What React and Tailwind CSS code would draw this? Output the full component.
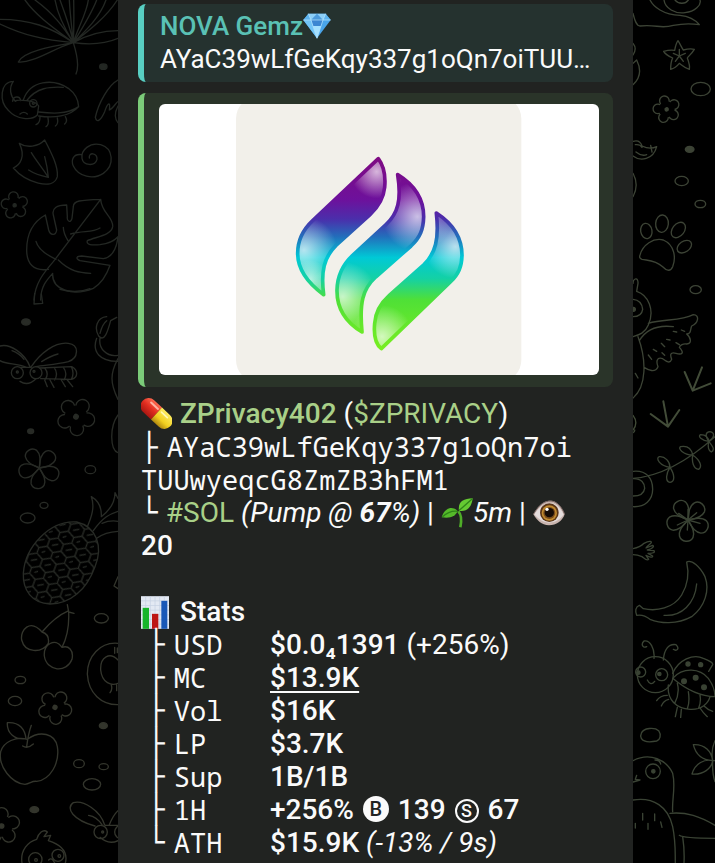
import React from 'react';

const stats = [
  { label: 'USD', value: <>$0.0₄1391 <span className="font-normal">(+256%)</span></> },
  { label: 'MC', value: <a href="#mc" className="underline decoration-2 underline-offset-4">$13.9K</a> },
  { label: 'Vol', value: '$16K' },
  { label: 'LP', value: '$3.7K' },
  { label: 'Sup', value: '1B/1B' },
  {
    label: '1H',
    value: (
      <>
        +256%{' '}
        <span className="mx-0.5 inline-flex size-[26px] items-center justify-center rounded-full bg-[#fafafa] align-[3px] text-xl leading-none font-medium text-[#212321]">B</span>
        {' '}139{' '}
        <span className="mx-0.5 inline-flex size-6 items-center justify-center rounded-full border-2 border-[#fafafa] align-[2px] text-lg leading-none font-medium">S</span>
        {' '}67
      </>
    ),
  },
  { label: 'ATH', value: <>$15.9K <i className="font-normal">(-13% / 9s)</i></> },
];

const angles = [0, 72, 144, 216, 288];

// Five round petals with a merged outline
const Blossom = ({ x, y, r, turn = 0 }) => (
  <g transform={`translate(${x} ${y}) rotate(${turn})`}>
    {angles.map((a) => (
      <circle key={a} cx="0" cy={-r * 0.66} r={r * 0.36} transform={`rotate(${a})`} />
    ))}
    <circle r={r * 0.6} fill="#000" stroke="none" />
    <circle r={r * 0.12} fill="currentColor" />
  </g>
);

// Five separate petals that meet in the middle
const Petals = ({ x, y, r, turn = 0 }) => (
  <g transform={`translate(${x} ${y}) rotate(${turn}) scale(${r / 60})`}>
    {angles.map((a) => (
      <path key={a} d="M0 0C-12-14-24-32-19-48C-12-64 12-64 19-48C24-32 12-14 0 0Z" transform={`rotate(${a})`} />
    ))}
  </g>
);

const Pebble = ({ x, y, rx, ry, solid }) => (
  <ellipse cx={x} cy={y} rx={rx} ry={ry} fill={solid ? 'currentColor' : 'none'} />
);

const LeftDoodles = () => (
  <svg viewBox="0 0 354 2589" preserveAspectRatio="xMinYMin slice" className="block h-full w-full" fill="none" stroke="currentColor" strokeWidth="4" strokeLinecap="round" strokeLinejoin="round" aria-hidden="true">
    <g className="text-[#232723]">
      <path d="M220 128C150 80 90 58 0 58M220 128C130 120 70 105 0 72M220 128C160 145 100 190 55 186C70 155 150 140 220 128M220 128C170 90 110 50 75 0M220 128C190 80 160 40 105 0M220 128C190 80 172 40 165 0M220 128C210 80 195 40 180 0M220 128C215 80 210 40 208 0M220 128C222 80 222 40 221 0M220 128C235 80 260 40 265 0M220 128C250 80 275 40 290 0M220 128C260 90 300 50 318 0M220 128C270 90 320 50 352 0M220 128C270 100 310 92 354 92M220 128C270 135 320 130 354 115M220 128C230 160 238 200 228 222" />
      <Pebble x="310" y="200" rx="11" ry="8" solid />
      <path d="M40 244C0 245-4 305 26 332C50 360 95 362 112 345L116 318C108 300 50 298 46 304C32 290 25 265 40 244M38 304C38 288 60 286 62 302M70 300C90 240 160 235 205 265C225 280 235 300 236 320C200 345 150 340 116 336M80 302C110 262 150 260 190 262M116 348C160 355 210 350 236 320M120 352Q120 370 108 374M144 354Q148 374 138 380M172 354Q176 372 166 378M196 350Q204 364 194 372M60 342Q72 332 82 342" />
      <circle cx="100" cy="310" r="11" /><circle cx="100" cy="310" r="3" />
      <path d="M354 240C325 255 295 310 286 352C290 370 302 362 314 335C322 310 332 300 328 330C340 325 350 305 354 305M354 318C342 340 345 360 354 368" />
      <path d="M58 430C80 445 115 440 134 420C155 460 175 500 172 530C160 575 75 545 40 504C60 495 78 470 58 430M145 532C110 525 98 518 86 510M145 532C125 500 110 485 94 458M145 532C142 500 138 485 134 470" />
      <path d="M245 464C220 460 212 480 220 498C235 530 280 540 310 520C345 495 340 445 302 434C270 426 242 450 246 475C250 498 285 500 291 478C292 458 265 455 268 474" />
      <Blossom x="44" y="616" r="40" turn="-8" />
      <path d="M102 900C105 850 130 820 160 785L302 598C240 600 220 602 220 620L216 655C212 670 200 665 202 650L200 615C170 615 155 625 160 645L170 690C168 710 150 705 146 690L136 645C100 665 80 700 80 750C80 790 100 815 145 808M122 900C122 860 140 840 158 820C155 870 220 890 280 865C305 850 320 825 330 796L240 782C225 775 230 768 245 768L310 776C340 772 350 740 354 712M302 598C305 640 340 650 338 680C335 705 290 710 262 722C258 735 275 736 300 734C330 730 345 720 354 710M204 722C190 700 190 690 190 682M212 702C250 690 275 700 300 684M168 778C130 760 112 740 108 724M175 780C210 815 240 818 272 820" />
      <path d="M104 880L102 912L128 910L124 882M180 868Q230 882 270 866" />
    </g>
    <g transform="translate(0 870)" className="text-[#282b26]">
      <Pebble x="78" y="96" rx="13" ry="9" solid />
      <path d="M90 230C75 190 30 160 0 168M80 232C50 218 20 225 0 212M94 230C120 190 165 155 205 160C240 165 235 205 205 215C165 225 130 225 108 230M125 215Q150 198 174 192M36 182Q58 190 72 208M120 234L215 230C235 240 235 262 215 268L122 266M134 234Q148 250 136 268M162 232Q176 250 164 270M190 232Q204 250 192 270M214 230Q224 250 214 268M60 274Q84 290 108 266M134 270L142 290M150 270L162 292M184 270L196 290M202 270L218 290M62 232H94" />
      <circle cx="52" cy="248" r="18" /><circle cx="108" cy="248" r="18" /><circle cx="52" cy="246" r="3" /><circle cx="102" cy="244" r="3" />
      <Blossom x="228" y="380" r="56" turn="32" />
      <Pebble x="92" y="424" rx="9" ry="7" solid />
      <Petals x="118" y="534" r="62" turn="-30" />
      <Pebble x="271" y="539" rx="16" ry="12" />
      <Pebble x="132" y="646" rx="12" ry="9" />
      <Pebble x="83" y="684" rx="22" ry="15" />
      <path d="M320 80C290 82 282 115 296 138C315 160 325 115 332 92L350 82M300 130C305 110 312 98 320 92M290 145C275 185 300 215 354 214M300 145C295 175 320 202 354 196M354 206C330 250 330 280 354 328M354 375C328 410 330 480 354 488" />
      <path d="M262 710C275 680 285 650 274 620C300 635 305 660 304 680C330 660 345 635 345 608L354 625M280 722C310 680 330 672 354 664M290 745C310 730 330 725 354 724M306 700Q330 690 354 694" />
      <defs>
        <pattern id="scales" width="44" height="64" patternUnits="userSpaceOnUse" patternTransform="rotate(20)">
          <path d="M0 12L22 0L44 12V34L22 46L0 34ZM22 46V64M14 26L28 18M36 56L44 50" fill="none" stroke="#282b26" strokeWidth="4" />
        </pattern>
      </defs>
      <path d="M70 850C75 770 150 690 230 696C290 710 310 770 285 830C260 900 210 942 150 942C95 940 68 900 70 850Z" fill="url(#scales)" />
    </g>
    <g transform="translate(0 1710)" className="text-[#33352c]">
      <path d="M126 186C90 145 60 180 65 210C75 250 125 250 145 220C148 200 140 190 126 186ZM126 186Q165 140 206 122M202 104L206 126L222 130M206 126C208 170 200 205 186 232M186 232C165 200 130 225 133 258C140 305 200 310 216 268C222 240 205 225 186 232M354 20L342 48L354 56" />
      <Pebble x="304" y="145" rx="21" ry="14" />
      <Pebble x="61" y="330" rx="16" ry="11" />
      <Pebble x="45" y="393" rx="20" ry="14" />
      <Blossom x="165" y="412" r="50" turn="32" />
      <path d="M354 220C300 215 262 260 262 312C265 370 305 405 354 404M354 270C330 245 300 260 302 300C306 340 335 348 354 340M334 345Q338 360 330 368M350 345V362M344 232V250M352 234V248" />
      <Pebble x="310" y="467" rx="12" ry="9" solid />
      <Pebble x="237" y="581" rx="16" ry="12" />
      <Pebble x="311" y="590" rx="14" ry="9" />
      <Pebble x="276" y="643" rx="26" ry="17" />
      <path d="M82 508C50 498 10 515 2 545C-6 590 35 640 75 643C90 642 95 632 110 634C150 630 180 580 172 530C165 490 120 480 82 508ZM80 530Q85 490 94 466M78 506C45 510 20 490 22 458C60 455 75 480 78 506M68 528Q82 538 100 522" />
      <Pebble x="103" y="719" rx="13" ry="9" solid />
      <Blossom x="5" y="768" r="54" />
      <path d="M314 765C300 720 250 690 220 698C195 715 220 750 285 768M306 764Q290 740 266 736M328 764Q340 735 354 722M316 766H354M300 802Q325 825 354 812" />
      <circle cx="302" cy="786" r="20" /><circle cx="308" cy="786" r="3" /><circle cx="364" cy="786" r="20" />
      <path d="M66 879C60 840 85 815 110 808C115 790 130 775 142 786L132 800L152 796L145 812C185 825 205 845 196 879M146 870Q156 860 164 879" />
      <circle cx="106" cy="868" r="20" /><circle cx="174" cy="856" r="18" /><circle cx="108" cy="870" r="4" /><circle cx="178" cy="858" r="4" />
    </g>
  </svg>
);

const RightDoodles = () => (
  <svg viewBox="39 0 246 2589" preserveAspectRatio="xMinYMin slice" className="block h-full w-full" fill="none" stroke="currentColor" strokeWidth="4" strokeLinecap="round" strokeLinejoin="round" aria-hidden="true">
    <g className="text-[#3c4335]">
      <path d="M39 40C45 65 50 78 60 78C110 72 120 88 160 76Q200 68 238 74C220 52 200 48 180 46C130 45 100 20 90 0M132 0C135 25 165 42 195 38C225 35 245 15 240 0M165 0C175 12 195 14 205 0M39 130Q52 145 39 165M39 190L50 180C65 210 60 235 39 254" />
      <path d="M174 122C182 135 186 145 190 150C205 146 215 146 223 148C216 160 206 168 202 174C208 190 210 200 208 208C194 204 186 196 178 190C170 200 160 206 152 208C152 195 154 182 158 174C145 168 135 162 131 154C145 150 158 150 164 151C166 140 168 130 174 122ZM178 168V148M178 168L196 160M178 168L190 184M178 168L166 184M178 168L160 160" />
      <Pebble x="242" y="267" rx="29" ry="20" />
      <Blossom x="140" y="328" r="40" turn="-15" />
      <path d="M39 424Q60 418 66 438Q90 450 110 440C100 480 60 485 39 468M46 434Q60 432 66 442M48 456Q65 470 80 464M92 436L96 456M39 520Q58 555 39 590" />
      <Pebble x="209" y="448" rx="13" ry="9" solid />
      <Pebble x="185" y="543" rx="20" ry="14" />
      <Pebble x="241" y="612" rx="16" ry="11" />
      <path d="M60 765C68 735 100 712 130 720C165 735 168 775 158 800C150 818 138 810 128 800C105 780 85 782 66 778C58 775 58 770 60 765Z" />
      <ellipse cx="79" cy="693" rx="17" ry="23" transform="rotate(-10 79 693)" />
      <ellipse cx="126" cy="671" rx="19" ry="26" transform="rotate(5 126 671)" />
      <ellipse cx="175" cy="690" rx="18" ry="26" transform="rotate(38 175 690)" />
      <ellipse cx="193" cy="740" rx="16" ry="24" transform="rotate(55 193 740)" />
      <Pebble x="227" y="869" rx="17" ry="12" />
      <path d="M39 850C40 835 55 830 54 850L50 874C85 885 105 930 85 975C75 1000 55 1005 39 1010M39 898Q65 900 68 928Q65 950 39 950M85 970C130 955 180 965 220 944C240 945 235 970 215 978C210 990 214 1002 200 1002C215 1015 215 1030 200 1032C190 1030 180 1035 178 1042C195 1060 185 1065 168 1060C150 1055 150 1065 155 1078C150 1092 140 1085 128 1076C110 1070 108 1085 114 1100C105 1120 85 1110 72 1102M58 1022C80 985 120 975 160 980M54 1010C80 1080 80 1160 39 1194M85 1065L95 1078M100 1048L110 1054M124 1030L134 1040M140 1018L150 1020M126 1058L134 1066M168 1028L178 1034M160 994L170 996M184 990L194 994M46 1120L54 1134" />
      <circle cx="40" cy="928" r="6" fill="currentColor" />
    </g>
    <g className="text-[#424c38]" strokeWidth="6">
      <path d="M218 1172L194 1116M218 1172L246 1102M218 1172L272 1150M144 1280L92 1242M144 1280L130 1204M144 1280L178 1230" />
      <path d="M39 1246Q56 1268 39 1290" strokeWidth="4" />
    </g>
    <g transform="translate(0 1290)" className="text-[#3a4334]">
      <path d="M39 145C110 140 190 105 285 20M150 112C120 108 105 85 118 80C135 78 150 95 150 112C165 135 165 155 150 157C135 155 138 130 150 112M218 75C190 75 172 55 182 50C205 46 215 60 218 75C240 90 248 110 236 118C220 116 215 95 218 75M266 34C245 32 232 18 242 14C258 14 266 24 266 34C280 50 285 60 274 66C262 60 264 45 266 34M266 34C255 18 256 6 270 5C285 8 285 22 266 34M39 124C80 120 98 145 98 178C98 210 75 232 39 230M39 146C65 145 74 160 74 175C72 190 60 198 39 198M39 8Q45 4 44 0" />
      <Petals x="204" y="270" r="64" turn="-30" />
      <path d="M204 270L176 250M204 270L204 238M204 270L230 248M204 270L240 280M204 270L202 300M204 270L172 285" />
      <path d="M39 356Q60 352 72 340C90 330 100 334 90 342Q80 350 78 354L98 346C105 350 95 356 82 360L102 362C106 368 98 370 84 370L98 378C98 384 90 382 78 376L86 388C80 394 72 384 66 380Q52 374 39 374" />
      <path d="M200 396C215 388 240 410 255 440C270 480 255 530 215 560C170 585 120 580 90 568Q70 552 50 556C45 545 46 530 58 526L70 536C110 545 160 535 185 495C200 470 210 440 200 396ZM230 462C225 520 185 560 132 556" />
      <circle cx="106" cy="734" r="54" /><circle cx="125" cy="734" r="18" /><circle cx="62" cy="726" r="15" /><circle cx="118" cy="732" r="5" fill="currentColor" /><circle cx="55" cy="728" r="5" fill="currentColor" />
      <path d="M82 750Q92 770 104 754M102 685C105 655 90 630 72 633C62 642 68 656 80 650M130 690C132 660 145 640 168 644C180 655 170 666 160 658M158 730C175 690 220 670 250 685C270 692 280 700 278 704L266 724M158 745C190 710 240 715 265 745C280 765 285 785 285 800C240 800 200 780 158 745M145 765C140 810 170 835 210 838C245 840 265 820 270 800M172 760Q180 790 164 820M205 785Q210 815 202 836M240 796Q244 815 236 834M142 796Q120 796 110 812M146 808Q130 812 124 828M172 832L166 860M184 838L182 862M240 834Q250 850 262 860M252 828Q264 840 278 844" />
      <g fill="currentColor"><circle cx="204" cy="702" r="6" /><circle cx="242" cy="704" r="6" /><circle cx="192" cy="754" r="7" /><circle cx="227" cy="743" r="7" /><circle cx="252" cy="772" r="7" /></g>
      <path d="M64 910C70 892 105 892 116 902C125 915 120 930 110 933C90 937 70 935 64 925Q60 918 64 910Z" />
      <path d="M278 992C240 990 225 965 220 944C255 942 275 965 278 992C255 985 225 1000 216 1032C250 1035 275 1015 278 992M285 932Q272 960 278 992Q276 1030 285 1055M278 992H285" />
      <path d="M39 992C90 965 140 990 158 1030C168 1070 155 1110 158 1145M39 1110C100 1100 145 1130 158 1190C168 1240 165 1270 166 1299M150 1150C200 1145 240 1160 285 1186M178 1216Q190 1225 285 1225M188 1220Q194 1260 192 1299M105 990Q120 990 122 1002M50 1036L46 1048L60 1050L39 1056M68 1150V1170M104 1152V1172M84 1180V1198M122 1176L126 1192M46 1180V1194" />
      <circle cx="99" cy="1024" r="22" /><circle cx="100" cy="1024" r="5" fill="currentColor" />
    </g>
  </svg>
);

const flames = [
  'M445 176C463 200 467 230 464 262C461 292 450 316 420 344L318 436C282 472 272 515 281 584C232 548 203 510 203 460C203 420 218 390 248 362Z',
  'M503 224C555 256 581 300 581 350C580 388 571 412 543 438L437 531C397 568 388 610 396 696C346 666 320 626 321 570C322 524 338 494 368 466L468 374C504 340 515 300 503 224Z',
  'M619 339C670 372 696 414 696 466C695 500 686 522 661 546L454 746C436 732 431 702 434 670C436 638 449 612 478 586L582 494C616 460 628 418 619 339Z',
];

const highlights = [
  [440, 215, 80], [222, 450, 100], [240, 540, 60],
  [562, 350, 105], [338, 590, 105],
  [676, 440, 95], [456, 710, 95],
];

const TokenImage = () => (
  <svg viewBox="0 0 1320 813" className="block w-full rounded-md bg-white" role="img" aria-label="Token logo">
    <defs>
      <linearGradient id="flame" gradientUnits="userSpaceOnUse" x1="0" y1="172" x2="0" y2="750">
        <stop offset="0" stopColor="#7f0a82" />
        <stop offset="0.22" stopColor="#6d119c" />
        <stop offset="0.32" stopColor="#4b2eab" />
        <stop offset="0.41" stopColor="#236dbb" />
        <stop offset="0.52" stopColor="#00c9d6" />
        <stop offset="0.63" stopColor="#14d1a4" />
        <stop offset="0.74" stopColor="#4fe037" />
        <stop offset="1" stopColor="#79ee20" />
      </linearGradient>
      <radialGradient id="gloss">
        <stop offset="0" stopColor="#fff" stopOpacity="0.7" />
        <stop offset="1" stopColor="#fff" stopOpacity="0" />
      </radialGradient>
      <clipPath id="flames">
        {flames.map((d) => <path key={d} d={d} />)}
      </clipPath>
    </defs>
    <rect x="231" y="-22" width="856" height="856" rx="66" fill="#f2f0ea" />
    <g transform="translate(213 -12)">
      {flames.map((d) => <path key={d} d={d} fill="url(#flame)" />)}
      <g clipPath="url(#flames)">
        {highlights.map(([x, y, r]) => <circle key={x} cx={x} cy={y} r={r} fill="url(#gloss)" />)}
      </g>
      {flames.map((d) => <path key={d} d={d} fill="none" stroke="url(#flame)" strokeWidth="11" strokeLinejoin="round" />)}
    </g>
  </svg>
);

const Gem = () => (
  <svg viewBox="0 0 84 76" className="inline-block h-[26px] w-7 align-[-4px]" role="img" aria-label="Gem">
    <path d="M16 1H68L83 20L42 75L1 20Z" fill="#4aa5ea" />
    <path d="M16 1L24 20H1ZM68 1L60 20H83Z" fill="#5fb4ef" />
    <path d="M16 1H68L60 20H24Z" fill="#8ccff8" />
    <path d="M24 20H60L42 1Z" fill="#4d9bdc" />
    <path d="M24 20H60L54 38H30Z" fill="#3c86d2" />
    <path d="M1 20H24L30 38L42 75Z" fill="#72c4f7" />
    <path d="M30 38H54L42 75Z" fill="#a4e0ff" />
    <path d="M1 20H83M24 20L42 75L60 20M16 1L24 20M68 1L60 20" fill="none" stroke="#bde8ff" strokeWidth="2" />
  </svg>
);

const Pill = () => (
  <svg viewBox="0 0 92 92" className="mr-px inline-block size-[31px] align-[-6px]" role="img" aria-label="Pill">
    <defs>
      <linearGradient id="red" x1="0" y1="0" x2="0" y2="1"><stop offset="0" stopColor="#ff6a50" /><stop offset="0.5" stopColor="#e22d20" /><stop offset="1" stopColor="#a81712" /></linearGradient>
      <linearGradient id="yellow" x1="0" y1="0" x2="0" y2="1"><stop offset="0" stopColor="#ffec60" /><stop offset="0.6" stopColor="#f1cf20" /><stop offset="1" stopColor="#b18810" /></linearGradient>
    </defs>
    <g transform="translate(46 46) rotate(43)">
      <path d="M0-24H-32A24 24 0 0 0-32 24H0Z" fill="url(#red)" />
      <path d="M0-24H32A24 24 0 0 1 32 24H0Z" fill="url(#yellow)" />
      <path d="M-34-13H-6" stroke="#ffb3a2" strokeWidth="6" strokeLinecap="round" />
      <path d="M8-13H32" stroke="#fff9b5" strokeWidth="5" strokeLinecap="round" />
    </g>
  </svg>
);

const Seedling = () => (
  <svg viewBox="0 0 96 90" className="inline-block h-[30px] w-8 align-[-6px]" role="img" aria-label="Seedling">
    <path d="M52 40C62 50 62 68 58 88" fill="none" stroke="#4fae28" strokeWidth="8" />
    <path d="M50 40C38 24 12 26 2 58C28 62 42 56 50 40Z" fill="#55b92a" />
    <path d="M54 38C50 12 66 2 95 1C92 28 78 42 54 38Z" fill="#65c932" />
    <path d="M50 40C34 38 18 44 4 57M54 37C66 28 80 14 94 2" fill="none" stroke="#2f8419" strokeWidth="4" />
  </svg>
);

const Eye = () => (
  <svg viewBox="0 0 96 76" className="inline-block h-[26px] w-8 align-[-4px]" role="img" aria-label="Eye">
    <path d="M1 42C20 10 35 1 54 1C72 2 88 22 95 42C88 62 70 75 48 75C25 74 12 60 1 42Z" fill="#c8b4ae" />
    <path d="M4 42C20 18 35 8 52 8C70 8 84 26 92 42C82 58 68 66 48 67C28 66 16 56 4 42Z" fill="#e4dcdc" />
    <circle cx="49" cy="37" r="28" fill="#5a3518" />
    <circle cx="49" cy="38" r="23" fill="#c08a30" />
    <circle cx="49" cy="38" r="18" fill="#7a4c1c" />
    <circle cx="49" cy="37" r="14" fill="#160c07" />
    <circle cx="42" cy="27" r="5" fill="#fff" />
    <path d="M1 42C20 10 35 2 54 2C72 3 88 22 95 42" fill="none" stroke="#75615f" strokeWidth="3" />
  </svg>
);

const Chart = () => (
  <svg viewBox="0 0 84 98" className="mr-1 inline-block h-[33px] w-7 align-[-8px]" role="img" aria-label="Chart">
    <rect width="84" height="98" fill="#e3e9f3" />
    <path d="M0 14H84M0 28H84M0 42H84M0 56H84M0 70H84M0 84H84M14 0V98M28 0V98M42 0V98M56 0V98M70 0V98" stroke="#c4d0e2" strokeWidth="2" />
    <path d="M5 35H24V98H5Z" fill="#17b52a" />
    <path d="M33 53H52V98H33Z" fill="#bd1515" />
    <path d="M61 14H79V98H61Z" fill="#1958b7" />
  </svg>
);

const Branch = ({ children }) => (
  <span className="mr-px font-['DejaVu_Sans_Mono',monospace] text-[28px] font-normal">{children}</span>
);

const App = () => {
  return (
    <div className="grid grid-cols-[118fr_515fr_82fr] overflow-hidden bg-black">
      <LeftDoodles />

      <main className="min-w-0 bg-[#212321] px-5 pt-1 font-[Roboto,sans-serif] text-[28px] leading-[33px] text-[#fafafa]">
        <blockquote className="rounded-lg border-l-6 border-[#58cec2] bg-[#25322f] py-[6px] pr-2 pl-4 text-[26px]">
          <div className="font-medium text-[#5ac1b5]">NOVA Gemz<Gem /></div>
          <p className="whitespace-nowrap">AYaC39wLfGeKqy337g1oQn7oiTUU…</p>
        </blockquote>

        <div className="mt-[11px] rounded-lg border-l-6 border-[#7bcb79] bg-[#2a3429] pt-[11px] pr-[14px] pb-3 pl-[15px]">
          <TokenImage />
        </div>

        <div className="mt-[10px] pl-[3px]">
          <div className="h-[33px] whitespace-nowrap">
            <Pill />{' '}
            <a href="#token" className="font-medium text-[#a9d088]">ZPrivacy402</a>{' '}
            (<a href="#ticker" className="text-[#a9d088]">$ZPRIVACY</a>)
          </div>
          <div className="h-[33px] whitespace-nowrap">
            <Branch>├</Branch>
            <code className="ml-2 font-['Noto_Sans_Mono','DejaVu_Sans_Mono',monospace] text-[27px]">AYaC39wLfGeKqy337g1oQn7oi</code>
          </div>
          <div className="h-[33px] font-['Noto_Sans_Mono','DejaVu_Sans_Mono',monospace] text-[27px]">TUUwyeqcG8ZmZB3hFM1</div>
          <div className="h-[33px] whitespace-nowrap">
            <Branch>└</Branch>{' '}
            <a href="#sol" className="text-[#a9d088]">#SOL</a>{' '}
            <i>(Pump @ <b>67</b>%)</i> | <Seedling /><i>5m</i> | <Eye />
          </div>
          <div className="h-[33px] font-medium">20</div>

          <h2 className="mt-[33px] h-[33px] font-medium"><Chart /> Stats</h2>
          <table className="border-collapse">
            <tbody>
              {stats.map((row, index) => (
                <tr key={row.label} className="h-[33px]">
                  <th scope="row" className="w-[129px] p-0 pl-[7px] text-left font-normal">
                    <div className="flex h-[33px] gap-2">
                      <Branch>{index === stats.length - 1 ? '└' : '├'}</Branch>
                      <span className="font-['Noto_Sans_Mono','DejaVu_Sans_Mono',monospace] text-[27px]">{row.label}</span>
                    </div>
                  </th>
                  <td className="p-0 font-medium whitespace-nowrap">
                    <div className="h-[33px]">{row.value}</div>
                  </td>
                </tr>
              ))}
            </tbody>
          </table>
        </div>
      </main>

      <RightDoodles />
    </div>
  );
};

export default App;
